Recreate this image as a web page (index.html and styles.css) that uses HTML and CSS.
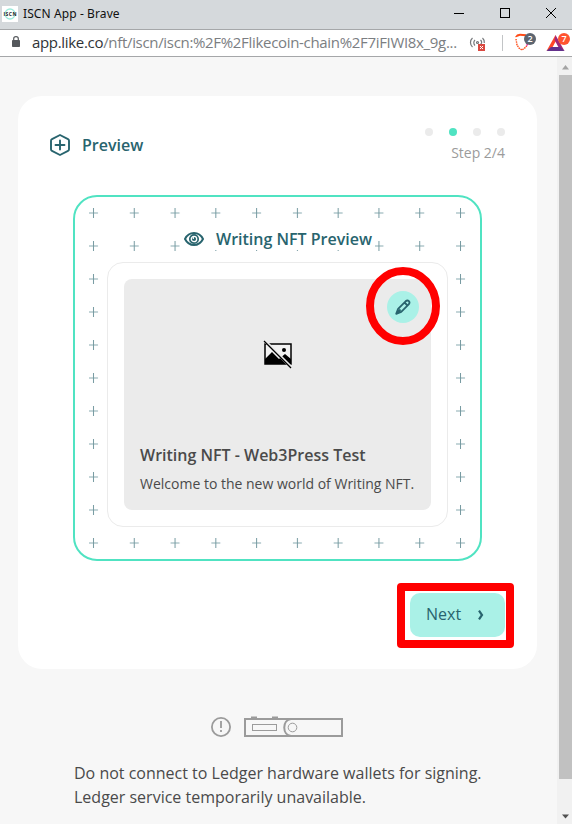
FILE: index.html
```html
<!DOCTYPE html>
<html lang="en">
<head>
<meta charset="utf-8">
<title>ISCN App</title>
<link rel="stylesheet" href="styles.css">
</head>
<body>
<div class="window">
  <header class="titlebar">
    <svg class="favicon" width="16" height="16" viewBox="0 0 16 16"><rect width="16" height="16" fill="#fff"/><circle cx="8" cy="8" r="5" fill="none" stroke="#9debdc" stroke-width="1.3"/><text x="1.500" y="10" class="favtext" textLength="13">ISCN</text></svg>
    <span class="wintitle">ISCN App - Brave</span>
    <svg class="controls" width="119" height="29" viewBox="0 0 119 29" fill="none" stroke="#000" shape-rendering="crispEdges"><path d="M1 14.500h10M47.500 9.500h9v9h-9z"/><path d="M93 9l10 10M103 9l-10 10" shape-rendering="auto"/></svg>
  </header>
  <div class="addressbar">
    <svg class="lock" width="10" height="12" viewBox="0 0 10 12"><rect x="1" y="4" width="8" height="7" rx=".8" fill="#55585c"/><path d="M2.700 4V2.700a2.300 2 0 0 1 4.600 0V4" fill="none" stroke="#55585c" stroke-width="1.200"/></svg>
    <span class="url"><b>app.like.co</b>/nft/iscn/iscn:%2F%2Flikecoin-chain%2F7iFIWI8x_9g...</span>
    <svg class="tools" width="114" height="26" viewBox="0 0 114 26" fill="none">
      <g transform="translate(10 0)">
      <g stroke="#74777a" stroke-width="1.200"><path d="M4.500 8c-2.700 2.500-2.700 6.500 0 9M7 10c-1.600 1.500-1.600 4 0 5.500M12.500 10c1.600 1.500 1.600 3 0 4.500M14.500 8c1.500 1.300 2 3 1.800 5"/><circle cx="9.500" cy="12.500" r="1"/></g>
      <rect x="10" y="14" width="7" height="7" fill="#da4940"/><path d="M12 16l3 3m0-3l-3 3" stroke="#fff"/>
      <path d="M34.500 5v16" stroke="#c2c4c6"/>
      <path d="M47 7l2-2.500 3-.8 6 .5v2l-6-.5-4 1.500z" fill="#ff4b16"/>
      <path d="M48 9l1 6 2 3 3 2 4-3 2-4" stroke="#ff4b16" stroke-width="1.400" stroke-dasharray="1.500 .8"/><path d="M58 15h2" stroke="#d3d"/>
      <circle cx="62" cy="9" r="6" fill="#5d6570"/><text x="62" y="12" class="badge">2</text>
      <path d="M87.500 6l8.500 14.500H79.500z" fill="#fff"/><path d="M87.500 5l-9 16 5-2 5-9z" fill="#ff4528"/><path d="M87.500 5l9 16-5-2-5-9z" fill="#a02779"/><path d="M78.500 21l4.500-4h9l4.500 4z" fill="#62308b"/>
      <circle cx="96" cy="9" r="6" fill="#ff5430"/><text x="96" y="12" class="badge">7</text>
      </g>
    </svg>
  </div>
  <div class="viewport">
    <main class="page">
      <section class="card">
        <div class="cardhead">
          <div class="heading">
            <svg width="22" height="24" viewBox="0 0 22 24" fill="none" stroke="#28646e" stroke-width="1.900" stroke-linejoin="round"><path d="M11 2l8 4.100q1 .5 1 1.700v8.400q0 1.200-1 1.700L11 22l-8-4.100q-1-.5-1-1.700V7.800q0-1.200 1-1.700z"/><path d="M6.500 12h9M11 7.500v9" stroke-linecap="round"/></svg>
            <h1>Preview</h1>
          </div>
          <div class="steps"><div class="dots"><i></i><i class="on"></i><i></i><i></i></div><span>Step 2/4</span></div>
        </div>
        <div class="frame">
          <svg class="pluses" width="405" height="362" viewBox="0 0 405 362"><defs><pattern id="plus" x="14" y="11" width="40.780" height="33" patternUnits="userSpaceOnUse"><path d="M0 5h9" stroke="#c4d5d8" stroke-width="2"/><path d="M4.500 0v10" stroke="#7499a0"/></pattern></defs><rect x="14" y="11" width="377" height="341" fill="url(#plus)"/></svg>
          <h2 class="subtitle"><svg width="20" height="14" viewBox="0 0 20 14" fill="none" stroke="#28646e"><path d="M1 7c4-8 14-8 18 0-4 8-14 8-18 0z" stroke-width="2"/><circle cx="10" cy="7" r="4.200" stroke-width="1.700"/><circle cx="10" cy="7" r="2.100" fill="#28646e" stroke="none"/><path d="M9.300 7V4.500" stroke="#fff" stroke-width="1.200"/></svg><span>Writing NFT Preview</span></h2>
          <div class="nft">
            <div class="content">
              <svg class="missing" width="30" height="29" viewBox="0 0 30 29"><rect x="2" y="4" width="26" height="20" fill="#f3f3f3" stroke="#000" stroke-width="1.500"/><path d="M2 19l7-7 7 7 6-5 6 5v5H2z"/><circle cx="21" cy="10" r="2"/><path d="M1.500 .5l27 27" stroke="#ebebeb" stroke-width="3"/><path d="M1 1l27 27" stroke="#000" stroke-width="1.300"/></svg>
              <h3>Writing NFT - Web3Press Test</h3>
              <p>Welcome to the new world of Writing NFT.</p>
              <span class="edit"><svg width="16" height="16" viewBox="0 0 16 16" fill="none" stroke="#28646e" stroke-width="1.800" stroke-linejoin="round"><path d="M1.200 14.800l1.900-5 7.500-7.500q1.800-1.500 3.300-.2 1.300 1.500-.2 3.300l-7.500 7.500zM1.200 14.800l4.300-4.300M10 4l2 2"/></svg></span>
            </div>
          </div>
        </div>
        <button class="next">Next<svg width="7" height="10" viewBox="0 0 7 10" fill="none" stroke="#28646e" stroke-width="2.200"><path d="M2 .7l3 4.300-3 4.300"/></svg></button>
      </section>
      <footer>
        <svg class="ledger" width="133" height="21" viewBox="0 0 133 21" fill="none" stroke="#9b9b9b"><circle cx="10" cy="11" r="9.100" stroke-width="1.800"/><path d="M10 5v7M10 14v2" stroke-width="1.800"/><path d="M40 1.500h6M61 1.500h6" stroke-width="2"/><rect x="34" y="3" width="97" height="17" stroke-width="2"/><rect x="41.500" y="8.500" width="24" height="6"/><path d="M80 3c-9 1-9 16 0 17" stroke-width="2"/><circle cx="81.500" cy="11.500" r="4.300"/></svg>
        <p>Do not connect to Ledger hardware wallets for signing.<br>Ledger service temporarily unavailable.</p>
      </footer>
    </main>
    <div class="scrollbar"><svg width="9" height="5" viewBox="0 0 9 5"><path d="M4.500 0L8 4.500H1z" fill="#a3a3a3"/></svg><span class="thumb"></span><svg class="down" width="9" height="5" viewBox="0 0 9 5"><path d="M1 0.500h7L4.500 4.500z" fill="#505050"/></svg></div>
  </div>
  <svg class="marks" width="572" height="824" viewBox="0 0 572 824" fill="none" stroke="#f00" stroke-width="8"><ellipse cx="403" cy="306" rx="33" ry="35"/><rect x="401" y="587" width="109" height="57" stroke-linejoin="round"/></svg>
</div>
</body>
</html>
```
FILE: styles.css
```css
* { box-sizing: border-box; }
body, h1, h2, h3, p { margin: 0; }
body { font-family: "Open Sans", "Noto Sans", sans-serif; color: #4a4a4a; background: #f7f7f7; }
svg { display: block; flex: none; }
.window { position: relative; width: 572px; height: 824px; overflow: hidden; display: flex; flex-direction: column; }
.titlebar { height: 30px; flex: none; background: #d5d9dc; border-bottom: 1px solid #a5a7a9; display: flex; align-items: center; padding: 0 0 2px 2px; }
.favtext { font: bold 5px "Open Sans", sans-serif; fill: #222; }
.wintitle { margin-left: 5px; font: 12px "Noto Sans", sans-serif; letter-spacing: .1px; color: #111; white-space: nowrap; }
.controls { margin-left: auto; }
.addressbar { height: 27px; flex: none; background: #fff; border-bottom: 1px solid #a5a7a9; display: flex; align-items: center; padding: 0 0 2px 11px; }
.url { margin-left: 11px; width: 426px; font: 15px "Open Sans", sans-serif; letter-spacing: -.32px; color: #7b7e82; white-space: nowrap; }
.url b { font-weight: 400; color: #303336; }
.tools { margin-top: 2px; }
.badge { font: 600 9px "Open Sans", sans-serif; fill: #fff; text-anchor: middle; }
.viewport { flex: 1; display: flex; }
.page { flex: 1; padding: 39px 20px 0 18px; }
.card { height: 573px; background: #fff; border-radius: 24px; padding: 31px 32px 0 31px; display: flex; flex-direction: column; }
.cardhead { height: 68px; display: flex; justify-content: space-between; }
.heading { display: flex; align-items: center; height: 35px; gap: 11px; }
.heading h1 { font-size: 16px; line-height: 24px; font-weight: 600; color: #28646e; }
.steps { text-align: right; color: #9b9b9b; font-size: 14px; line-height: 20px; padding-top: 1px; }
.dots { display: flex; justify-content: flex-end; gap: 16px; margin-bottom: 7px; }
.dots i { width: 8px; height: 8px; border-radius: 50%; background: #ebebeb; }
.dots .on { background: #50e3c2; }
.frame { position: relative; width: 409px; height: 366px; flex: none; margin-left: 24px; border: 2px solid #50e3c2; border-radius: 24px; padding: 30px 32px 0; }
.pluses { position: absolute; left: 0; top: 0; }
.subtitle { position: relative; width: 195px; height: 23px; margin: 0 auto; background: #fff; display: flex; align-items: center; gap: 12px; font-size: 16px; line-height: 24px; font-weight: 600; color: #28646e; padding-left: 4px; white-space: nowrap; }
.nft { position: relative; height: 265px; margin-top: 12px; background: #fff; border: 1px solid #ebebeb; border-radius: 16px; padding: 16px; }
.content { position: relative; height: 231px; background: #ebebeb; border-radius: 8px; padding: 61px 16px 0; white-space: nowrap; }
.missing { margin: 0 auto; }
.content h3 { margin-top: 74px; font-size: 16px; line-height: 24px; font-weight: 600; }
.content p { margin-top: 7px; font-size: 14px; line-height: 20px; }
.edit { position: absolute; right: 12px; top: 12px; width: 32px; height: 32px; border-radius: 50%; background: #aaf1e7; display: grid; place-items: center; }
.next { margin: 32px 0 0 auto; width: 95px; height: 44px; border: 0; border-radius: 10px; background: #aaf1e7; color: #28646e; font: 16px "Open Sans", sans-serif; display: flex; align-items: center; gap: 16px; padding: 0 16px 2px; }
.next svg { margin-top: 2px; }
footer { padding: 47px 0 0 56px; }
.ledger { margin-left: 137px; }
footer p { font-size: 16px; line-height: 24px; margin-top: 24px; white-space: nowrap; }
.scrollbar { width: 15px; background: #f1f1f1; display: flex; flex-direction: column; padding: 8px 0 0 2px; }
.scrollbar svg { margin-left: 2px; }
.thumb { height: 704px; margin-top: 5px; background: #c1c1c1; flex: none; }
.scrollbar .down { margin-top: 35px; }
.marks { position: absolute; inset: 0; pointer-events: none; }
```
